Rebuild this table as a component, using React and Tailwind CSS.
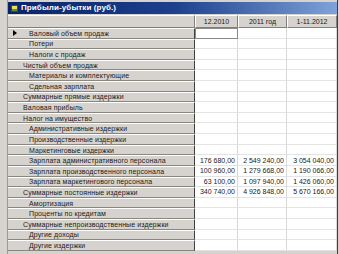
import React from "react";

const rows = [
  { t: "Валовый объем продаж", l: 1 },
  { t: "Потери", l: 1 },
  { t: "Налоги с продаж", l: 1 },
  { t: "Чистый объем продаж", l: 0 },
  { t: "Материалы и комплектующие", l: 1 },
  { t: "Сдельная зарплата", l: 1 },
  { t: "Суммарные прямые издержки", l: 0 },
  { t: "Валовая прибыль", l: 0 },
  { t: "Налог на имущество", l: 0 },
  { t: "Административные издержки", l: 1 },
  { t: "Производственные издержки", l: 1 },
  { t: "Маркетинговые издержки", l: 1 },
  { t: "Зарплата административного персонала", l: 1, v: ["176 680,00", "2 549 240,00", "3 054 040,00"] },
  { t: "Зарплата производственного персонала", l: 1, v: ["100 960,00", "1 279 668,00", "1 190 066,00"] },
  { t: "Зарплата маркетингового персонала", l: 1, v: ["63 100,00", "1 097 940,00", "1 426 060,00"] },
  { t: "Суммарные постоянные издержки", l: 0, v: ["340 740,00", "4 926 848,00", "5 670 166,00"] },
  { t: "Амортизация", l: 1 },
  { t: "Проценты по кредитам", l: 1 },
  { t: "Суммарные непроизводственные издержки", l: 0 },
  { t: "Другие доходы", l: 1 },
  { t: "Другие издержки", l: 1 },
];

const cols = ["12.2010", "2011 год", "1-11.2012"];
const widths = ["w-[43px]", "w-[49px]", "w-[50px]"];

export default function App() {
  return (
    <div className="w-[339px] h-[254px] bg-[#d6d3ce] flex overflow-hidden font-['Liberation_Sans',sans-serif] text-[#1a1a1a]">
      {/* window frame on the left */}
      <div className="w-[8px] shrink-0 border-r border-[#9c9a94]" />

      <div className="flex flex-col pt-[2px] w-[329px]">
        {/* title bar */}
        <div className="h-[12px] flex items-center gap-[3px] pl-[3px] bg-gradient-to-r from-[#0a246a] via-[#1d3f8c] to-[#7fa2d8]">
          <div className="w-[7px] h-[7px] bg-[#e8e060] border border-[#4a4a20] flex items-end">
            <div className="w-full h-[2px] bg-[#6a8a30]" />
          </div>
          <span className="text-white font-bold text-[8px] leading-none tracking-[0.1px]">
            Прибыли-убытки (руб.)
          </span>
        </div>

        {/* header row */}
        <div className="flex h-[13px] mt-[1px]">
          <div className="w-[187px] border-t border-white border-b border-b-[#808080] border-r border-r-[#808080]" />
          {cols.map((c, i) => (
            <div
              key={c}
              className={`${widths[i]} flex items-center justify-center text-[7px] leading-none border-t border-l border-white border-b border-b-[#808080] border-r border-r-[#808080]`}
            >
              {c}
            </div>
          ))}
        </div>

        {/* body */}
        <div className="flex flex-col">
          {rows.map((r, idx) => (
            <div key={r.t} className="flex h-[10.62px]">
              <div className="w-[187px] relative flex items-center overflow-hidden whitespace-nowrap border-t border-t-white border-b border-b-[#8a8780] border-r border-r-[#404040]">
                {idx === 0 && (
                  <span className="absolute left-[5px] top-1/2 -translate-y-1/2 w-0 h-0 border-y-[3.5px] border-y-transparent border-l-[4px] border-l-black" />
                )}
                <span className={`text-[7px] tracking-[0.1px] leading-none ${r.l ? "pl-[21px]" : "pl-[15px]"}`}>{r.t}</span>
              </div>
              {cols.map((c, i) => (
                <div
                  key={c}
                  className={`${widths[i]} bg-white flex items-center justify-end pr-[2px] text-[7px] leading-none border-b border-[#e4e4e4] border-r border-r-[#d8d8d8] ${
                    idx === 0 && i === 0 ? "outline outline-1 -outline-offset-1 outline-[#8a8a8a]" : ""
                  }`}
                >
                  {r.v ? r.v[i] : ""}
                </div>
              ))}
            </div>
          ))}
        </div>
      </div>

      {/* right edge */}
      <div className="w-[1px] shrink-0 border-l border-[#404040]" />
    </div>
  );
}
